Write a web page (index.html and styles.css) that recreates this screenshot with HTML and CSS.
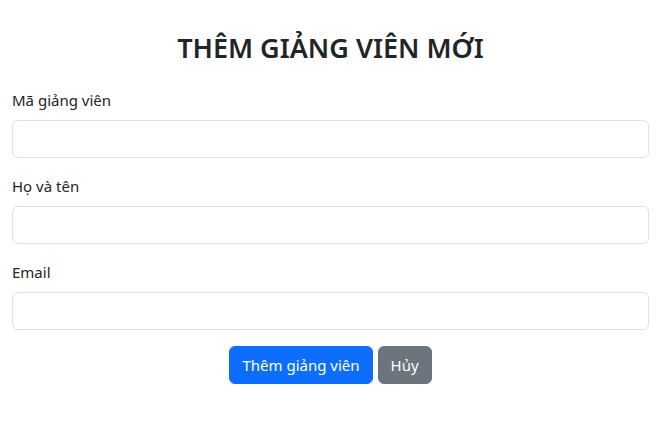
FILE: index.html
```html
<!DOCTYPE html>
<html lang="vi">
<head>
<meta charset="utf-8">
<title>Thêm giảng viên mới</title>
<link rel="stylesheet" href="styles.css">
</head>
<body>
<div class="container">
  <h2 class="title">THÊM GIẢNG VIÊN MỚI</h2>
  <form class="form">
    <div class="field">
      <label class="label" for="ma">Mã giảng viên</label>
      <input class="input" id="ma" type="text">
    </div>
    <div class="field">
      <label class="label" for="ten">Họ và tên</label>
      <input class="input" id="ten" type="text">
    </div>
    <div class="field">
      <label class="label" for="email">Email</label>
      <input class="input" id="email" type="email">
    </div>
    <div class="actions">
      <button type="submit" class="btn btn-primary">Thêm giảng viên</button>
      <button type="button" class="btn btn-secondary">Hủy</button>
    </div>
  </form>
</div>
</body>
</html>
```
FILE: styles.css
```css
* { box-sizing: border-box; }
html, body { margin: 0; padding: 0; background: #fff; }
body {
  font-family: "Noto Sans", "Open Sans", sans-serif;
  font-size: 15px;
  line-height: 1.6;
  color: #212529;
}
.container {
  padding: 28px 12px 0;
}
.title {
  margin: 0 0 20px;
  text-align: center;
  font-size: 27px;
  font-weight: 600;
  line-height: 40px;
  color: #212529;
}
.field { margin-bottom: 16px; }
.label {
  display: block;
  margin-bottom: 8px;
  line-height: 24px;
}
.input {
  display: block;
  width: 100%;
  height: 38px;
  padding: 6px 12px;
  font: inherit;
  border: 1px solid #dee2e6;
  border-radius: 6px;
  background: #fff;
}
.actions {
  display: flex;
  justify-content: center;
  gap: 5px;
}
.btn {
  height: 38px;
  padding: 6px 12px;
  font: inherit;
  line-height: 24px;
  color: #fff;
  border: 1px solid transparent;
  border-radius: 6px;
}
.btn-primary { background: #0d6efd; border-color: #0d6efd; }
.btn-secondary { background: #6c757d; border-color: #6c757d; }
```
